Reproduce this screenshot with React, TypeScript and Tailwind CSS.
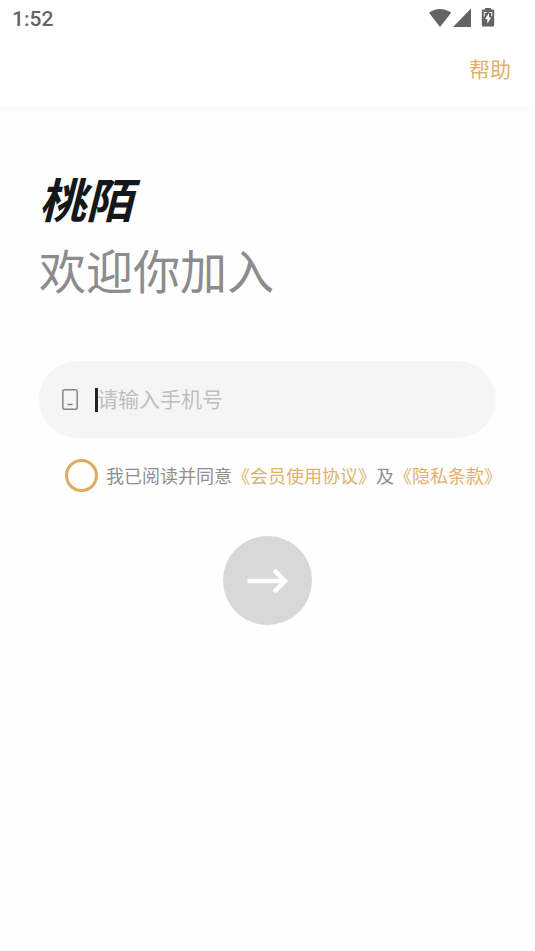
import React, { useState } from 'react';

function StatusBar() {
  return (
    <div className="flex h-9 items-center justify-between pl-3 pr-10 font-['Roboto','Liberation_Sans',sans-serif] text-[#646464]">
      <span className="pt-0.5 text-[21px] leading-9 font-medium">1:52</span>
      <div className="flex items-center">
        <svg viewBox="0 0 24 20" className="h-5 w-6" fill="currentColor" aria-hidden="true">
          <path d="M11 19 0 4.800C3.200 2.300 7 1 11 1s8 1.300 11.200 3.800z" />
        </svg>
        <svg viewBox="0 0 20 20" className="h-5 w-5" fill="currentColor" aria-hidden="true">
          <path d="M18 .5v18.500H0z" />
        </svg>
        <svg viewBox="0 0 14 20" className="ml-2 h-5 w-[14px]" fill="currentColor" aria-hidden="true">
          <path d="M4 0h6v1.500h2a1.200 1.200 0 0 1 1.200 1.200v14.600a1.200 1.200 0 0 1-1.200 1.200H2a1.200 1.200 0 0 1-1.200-1.200V2.700A1.200 1.200 0 0 1 2 1.500h2z" />
          <path d="M3.200 8.500V4.500h2.300M8.500 4.500h2.300v3.700" fill="none" stroke="#fff" strokeWidth="1" />
          <path d="M8 5v4.500h2.300L6.300 15.500V11H4z" fill="#fff" />
        </svg>
      </div>
    </div>
  );
}

export default function App() {
  const [phone, setPhone] = useState('');
  const [agreed, setAgreed] = useState(false);

  return (
    <div lang="zh-CN" className="min-h-screen bg-[#fefefe] font-['Noto_Sans_CJK_SC',sans-serif]">
      <header className="bg-white shadow-[0_2px_8px_rgba(0,0,0,0.025)]">
        <StatusBar />
        <div className="flex h-[71px] justify-end px-6">
          <a href="#help" className="text-[21px] leading-[64px] text-[#e0b06c]">帮助</a>
        </div>
      </header>

      <main className="px-[39px] pt-[55px]">
        <h1 className="text-[47px] leading-[71px] text-[#8c8c8c]">
          <span className="block font-bold italic text-[#15181a]">桃陌</span>
          欢迎你加入
        </h1>

        <form className="mt-[57px]" onSubmit={e => e.preventDefault()}>
          <div className="flex h-[77px] items-center rounded-full bg-[#f5f5f5] px-[23px]">
            <svg viewBox="0 0 16 21" className="h-[21px] w-4 shrink-0" fill="none" stroke="#858585" aria-hidden="true">
              <rect x=".8" y=".8" width="14.400" height="19.400" rx="2" strokeWidth="1.500" />
              <path d="M5.500 15.500h5" strokeWidth="1.500" />
            </svg>
            <div className="relative ml-[17px] flex flex-1 items-center">
              <input
                type="tel"
                aria-label="手机号"
                placeholder="请输入手机号"
                value={phone}
                onChange={e => setPhone(e.target.value)}
                className="w-full bg-transparent pb-1 pl-0.5 text-[21px] leading-8 text-[#15181a] caret-transparent outline-none placeholder:text-[#bfbfbf]"
              />
              {!phone && <span className="absolute left-0 h-6 w-[3px] bg-[#222]" />}
            </div>
          </div>

          <div className="mt-[21px] flex items-center gap-2 whitespace-nowrap pl-[26px] text-lg leading-7 text-[#8f8f8f]">
            <input
              id="agree"
              type="checkbox"
              checked={agreed}
              onChange={e => setAgreed(e.target.checked)}
              className="size-[33px] shrink-0 appearance-none rounded-full border-3 border-[#dfab61] checked:bg-[#dfab61]"
            />
            <div className="pb-0.5">
              <label htmlFor="agree">我已阅读并同意</label>
              <a href="#terms" className="text-[#e0b06c]">《会员使用协议》</a>
              及
              <a href="#privacy" className="text-[#e0b06c]">《隐私条款》</a>
            </div>
          </div>

          <button
            type="submit"
            aria-label="下一步"
            className="mx-auto mt-11 flex size-[89px] items-center justify-center rounded-full bg-[#d8d8d8]"
          >
            <svg viewBox="0 0 42 28" className="h-7 w-[42px]" fill="none" stroke="#fff" strokeWidth="4.500" aria-hidden="true">
              <path d="M.5 14h37M27 3l11 11-11 11" />
            </svg>
          </button>
        </form>
      </main>
    </div>
  );
}
